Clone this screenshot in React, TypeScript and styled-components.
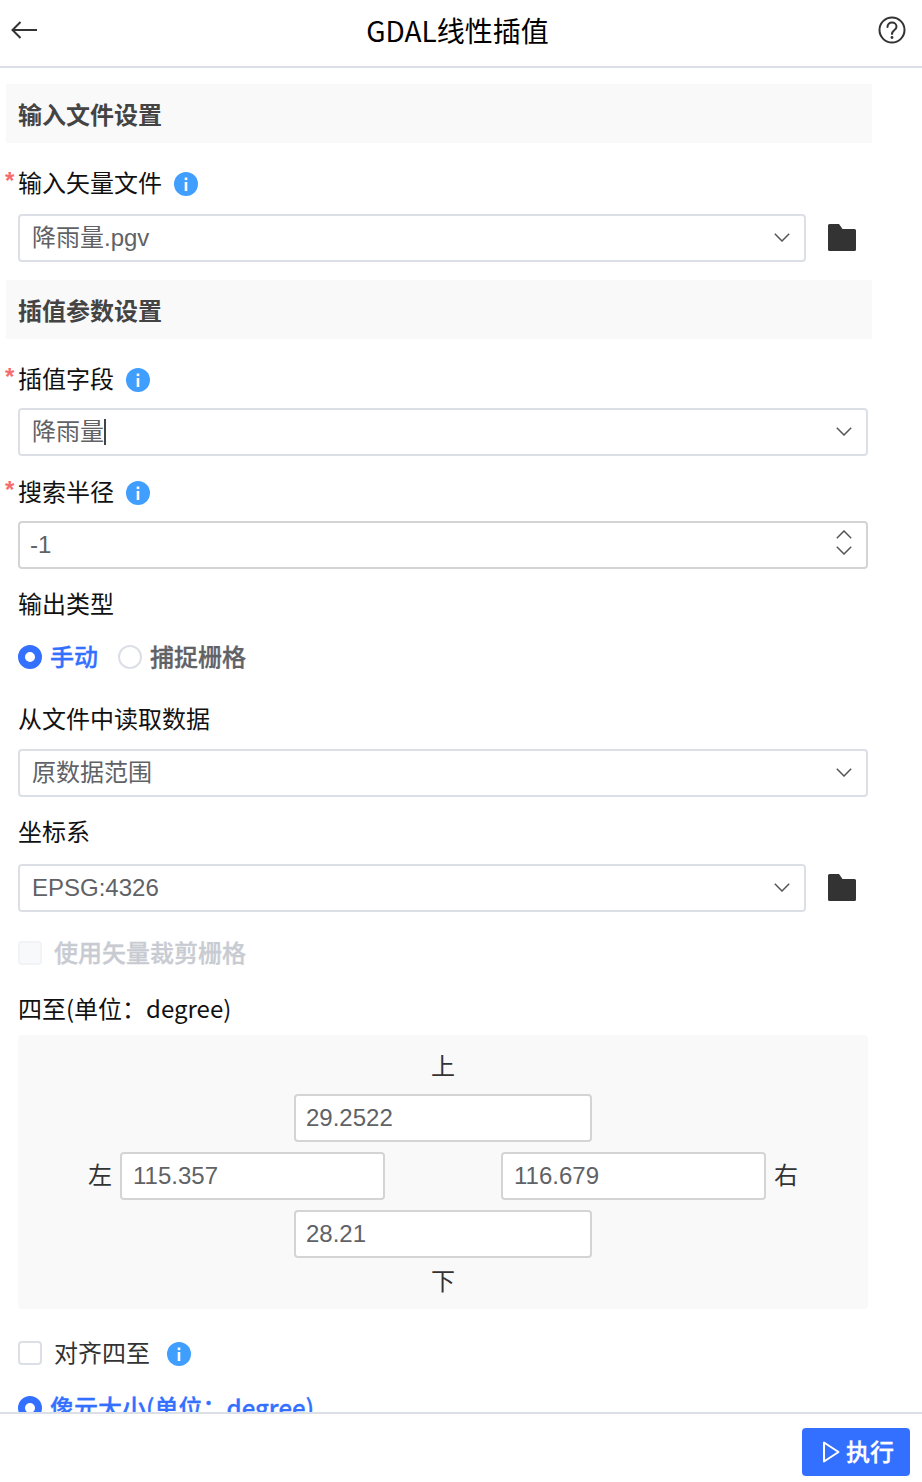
import { ReactNode } from 'react'
import styled, { createGlobalStyle } from 'styled-components'

const GlobalStyle = createGlobalStyle`
  html, body {
    margin: 0;
    padding: 0;
    background: #fff;
  }
  body {
    font-family: 'Noto Sans CJK SC', 'Noto Sans', sans-serif;
  }
  * {
    box-sizing: border-box;
  }
`

const Page = styled.div`
  display: flex;
  flex-direction: column;
  width: 922px;
  height: 1482px;
  overflow: hidden;
`
const Header = styled.header`
  display: flex;
  flex: none;
  align-items: center;
  justify-content: space-between;
  height: 68px;
  padding: 0 16px 6px 11px;
  border-bottom: 2px solid #dcdfe6;
`
const Title = styled.h1`
  margin: 0;
  font-size: 28px;
  font-weight: 400;
  line-height: 40px;
  color: #000;
`
const Content = styled.main`
  flex: 1;
  min-height: 0;
  overflow: hidden;
  padding: 16px 0 0 6px;
`
const Section = styled.h2<{ $mt?: number }>`
  display: flex;
  align-items: center;
  width: 866px;
  height: 59px;
  margin: ${({ $mt }) => $mt ?? 0}px 0 0;
  padding-left: 12px;
  background: #f9f9f9;
  font-size: 24px;
  font-weight: 700;
  color: #444;
`
const LabelRow = styled.div<{ $mt: number }>`
  display: flex;
  align-items: center;
  height: 36px;
  margin-top: ${({ $mt }) => $mt}px;
  padding-left: 12px;
  font-size: 24px;
  line-height: 36px;
  color: #111;
`
const LabelText = styled.span`
  margin-bottom: 3px;
`
const Star = styled.span`
  position: absolute;
  margin: -4px 0 0 -13px;
  font-family: 'Liberation Sans', sans-serif;
  font-size: 24px;
  font-weight: 700;
  color: #f56c6c;
`
const InfoBadge = styled.svg<{ $ml?: number }>`
  flex: none;
  margin: 2px 0 0 ${({ $ml }) => $ml ?? 12}px;
`
const FieldRow = styled.div<{ $mt: number }>`
  display: flex;
  align-items: center;
  margin-top: ${({ $mt }) => $mt}px;
  padding-left: 12px;
`
const InputBox = styled.div<{ $width: number; $grey?: boolean; $pad?: number }>`
  display: flex;
  flex: none;
  align-items: center;
  justify-content: space-between;
  width: ${({ $width }) => $width}px;
  height: 48px;
  padding: 0 14px 0 ${({ $pad }) => $pad ?? 12}px;
  border: 2px solid ${({ $grey }) => ($grey ? '#d4d4d4' : '#dcdfe6')};
  border-radius: 4px;
  background: #fff;
  font-family: 'Liberation Sans', 'Noto Sans CJK SC', sans-serif;
  font-size: 24px;
  line-height: 44px;
  color: #606266;
`
const InputText = styled.span`
  display: flex;
  align-items: center;
`
const Caret = styled.i`
  display: block;
  width: 2px;
  height: 26px;
  background: #444;
`
const SelectChevron = styled.span`
  display: flex;
  margin-bottom: 2px;
`
const FolderButton = styled.span`
  display: flex;
  margin: 0 0 1px 22px;
`
const Spinner = styled.span`
  display: flex;
  flex-direction: column;
  gap: 7px;
  margin-top: -6px;
`
const RadioRow = styled.div<{ $mt: number }>`
  display: flex;
  align-items: center;
  height: 36px;
  margin-top: ${({ $mt }) => $mt}px;
  padding-left: 12px;
`
const RadioDot = styled.span<{ $on?: boolean }>`
  flex: none;
  width: 24px;
  height: 24px;
  border-radius: 50%;
  border: ${({ $on }) => ($on ? '7px solid #3370ff' : '2px solid #dcdfe6')};
  background: #fff;
`
const RadioText = styled.span<{ $on?: boolean }>`
  margin: 0 20px 4px 8px;
  font-size: 24px;
  font-weight: 500;
  -webkit-text-stroke: 0.3px currentColor;
  color: ${({ $on }) => ($on ? '#3370ff' : '#606266')};
  white-space: nowrap;
`
const CheckRow = styled.div<{ $mt: number }>`
  display: flex;
  align-items: center;
  height: 36px;
  margin-top: ${({ $mt }) => $mt}px;
  padding-left: 12px;
`
const CheckBox = styled.span<{ $disabled?: boolean }>`
  flex: none;
  width: 24px;
  height: 24px;
  border-radius: 4px;
  border: 2px solid ${({ $disabled }) => ($disabled ? '#f1f3f7' : '#dcdfe6')};
  background: ${({ $disabled }) => ($disabled ? '#f8f9fb' : '#fff')};
`
const CheckText = styled.span<{ $disabled?: boolean }>`
  margin: 0 0 4px 12px;
  font-size: 24px;
  font-weight: ${({ $disabled }) => ($disabled ? 500 : 400)};
  -webkit-text-stroke: ${({ $disabled }) => ($disabled ? '0.3px currentColor' : '0')};
  color: ${({ $disabled }) => ($disabled ? '#c8cbd2' : '#333')};
`
const ExtentPanel = styled.div`
  display: flex;
  flex-direction: column;
  align-items: center;
  gap: 10px;
  width: 850px;
  height: 274px;
  margin: 8px 0 0 12px;
  padding-top: 13px;
  border-radius: 4px;
  background: #f9f9f9;
`
const SideLabel = styled.span`
  font-size: 24px;
  line-height: 36px;
  color: #333;
`
const TopLabel = styled(SideLabel)`
  margin-top: -1px;
  margin-bottom: 1px;
`
const BottomLabel = styled(SideLabel)`
  margin-top: -6px;
`
const ExtentMiddle = styled.div`
  display: flex;
  align-items: center;
  gap: 8px;
  ${SideLabel} {
    margin-bottom: 4px;
  }
`
const ExtentGap = styled.span`
  width: 100px;
`
const Footer = styled.footer`
  display: flex;
  flex: none;
  justify-content: flex-end;
  height: 70px;
  padding: 14px 12px 0 0;
  border-top: 2px solid #dcdfe6;
`
const RunButton = styled.button`
  display: flex;
  align-items: center;
  gap: 6px;
  width: 108px;
  height: 48px;
  padding: 0 0 0 20px;
  border: 0;
  border-radius: 4px;
  background: #3370ff;
  font-family: inherit;
  font-size: 24px;
  font-weight: 500;
  -webkit-text-stroke: 0.3px currentColor;
  color: #fff;
`
const RunLabel = styled.span`
  margin-bottom: 3px;
`

const BackIcon = () => (
  <svg width="26" height="18" viewBox="0 0 26 18" fill="none" stroke="#333" strokeWidth="2">
    <path d="M26 9H1.5M9.5 1L1.5 9l8 8" />
  </svg>
)

const HelpIcon = () => (
  <svg width="28" height="28" viewBox="0 0 28 28" fill="none" stroke="#333" strokeWidth="2">
    <circle cx="14" cy="14" r="12.5" />
    <path d="M9.5 11c0-2.8 2-4.5 4.5-4.5s4.5 1.8 4.5 4.2c0 3.3-4.5 3.3-4.5 7.3" strokeLinecap="round" />
    <circle cx="14" cy="21.5" r="1.4" fill="#333" stroke="none" />
  </svg>
)

const InfoIcon = ({ ml }: { ml?: number }) => (
  <InfoBadge $ml={ml} width="24" height="24" viewBox="0 0 24 24">
    <circle cx="12" cy="12" r="12" fill="#409eff" />
    <rect x="10.7" y="10" width="2.6" height="9" fill="#fff" />
    <rect x="10.7" y="5.5" width="2.6" height="2.6" fill="#fff" />
  </InfoBadge>
)

const ChevronDown = () => (
  <svg width="16" height="9" viewBox="0 0 16 9" fill="none" stroke="#555" strokeWidth="1.5">
    <path d="M.8.8L8 8l7.2-7.2" />
  </svg>
)

const ChevronUp = () => (
  <svg width="16" height="9" viewBox="0 0 16 9" fill="none" stroke="#555" strokeWidth="1.5">
    <path d="M.8 8.2L8 1l7.2 7.2" />
  </svg>
)

const FolderIcon = () => (
  <FolderButton>
    <svg width="28" height="27" viewBox="0 0 28 27" fill="#333">
      <path d="M1.5 0h9.5l3.5 5H26.5A1.5 1.5 0 0 1 28 6.5v19a1.5 1.5 0 0 1-1.5 1.5h-25A1.5 1.5 0 0 1 0 25.5v-24A1.5 1.5 0 0 1 1.5 0z" />
    </svg>
  </FolderButton>
)

const PlayIcon = () => (
  <svg width="18" height="22" viewBox="0 0 18 22" fill="none" stroke="#fff" strokeWidth="2">
    <path d="M2 1.5v19L16.5 11z" strokeLinejoin="round" />
  </svg>
)

function FieldLabel({ children, mt, required, info }: { children: ReactNode; mt: number; required?: boolean; info?: boolean }) {
  return (
    <LabelRow $mt={mt}>
      {required && <Star>*</Star>}
      <LabelText>{children}</LabelText>
      {info && <InfoIcon />}
    </LabelRow>
  )
}

function SelectField({ value, mt, width = 850, folder, caret }: { value: string; mt: number; width?: number; folder?: boolean; caret?: boolean }) {
  return (
    <FieldRow $mt={mt}>
      <InputBox $width={width}>
        <InputText>
          {value}
          {caret && <Caret />}
        </InputText>
        <SelectChevron>
          <ChevronDown />
        </SelectChevron>
      </InputBox>
      {folder && <FolderIcon />}
    </FieldRow>
  )
}

export default function App() {
  return (
    <Page>
      <GlobalStyle />
      <Header>
        <BackIcon />
        <Title>GDAL线性插值</Title>
        <HelpIcon />
      </Header>
      <Content>
        <Section>输入文件设置</Section>
        <FieldLabel mt={22} required info>输入矢量文件</FieldLabel>
        <SelectField mt={13} value="降雨量.pgv" width={788} folder />

        <Section $mt={18}>插值参数设置</Section>
        <FieldLabel mt={22} required info>插值字段</FieldLabel>
        <SelectField mt={11} value="降雨量" caret />
        <FieldLabel mt={18} required info>搜索半径</FieldLabel>
        <FieldRow $mt={11}>
          <InputBox $width={850} $grey $pad={10}>
            <InputText>-1</InputText>
            <Spinner>
              <ChevronUp />
              <ChevronDown />
            </Spinner>
          </InputBox>
        </FieldRow>
        <FieldLabel mt={17}>输出类型</FieldLabel>
        <RadioRow $mt={17}>
          <RadioDot $on />
          <RadioText $on>手动</RadioText>
          <RadioDot />
          <RadioText>捕捉栅格</RadioText>
        </RadioRow>
        <FieldLabel mt={26}>从文件中读取数据</FieldLabel>
        <SelectField mt={12} value="原数据范围" />
        <FieldLabel mt={17}>坐标系</FieldLabel>
        <SelectField mt={14} value="EPSG:4326" width={788} folder />
        <CheckRow $mt={23}>
          <CheckBox $disabled />
          <CheckText $disabled>使用矢量裁剪栅格</CheckText>
        </CheckRow>
        <FieldLabel mt={20}>四至(单位：degree)</FieldLabel>
        <ExtentPanel>
          <TopLabel>上</TopLabel>
          <InputBox $width={298} $grey $pad={10}>29.2522</InputBox>
          <ExtentMiddle>
            <SideLabel>左</SideLabel>
            <InputBox $width={265} $grey $pad={11}>115.357</InputBox>
            <ExtentGap />
            <InputBox $width={265} $grey $pad={11}>116.679</InputBox>
            <SideLabel>右</SideLabel>
          </ExtentMiddle>
          <InputBox $width={298} $grey $pad={10}>28.21</InputBox>
          <BottomLabel>下</BottomLabel>
        </ExtentPanel>
        <CheckRow $mt={26}>
          <CheckBox />
          <CheckText>对齐四至</CheckText>
          <InfoIcon ml={17} />
        </CheckRow>
        <RadioRow $mt={19}>
          <RadioDot $on />
          <RadioText $on>像元大小(单位：degree)</RadioText>
        </RadioRow>
      </Content>
      <Footer>
        <RunButton>
          <PlayIcon />
          <RunLabel>执行</RunLabel>
        </RunButton>
      </Footer>
    </Page>
  )
}
